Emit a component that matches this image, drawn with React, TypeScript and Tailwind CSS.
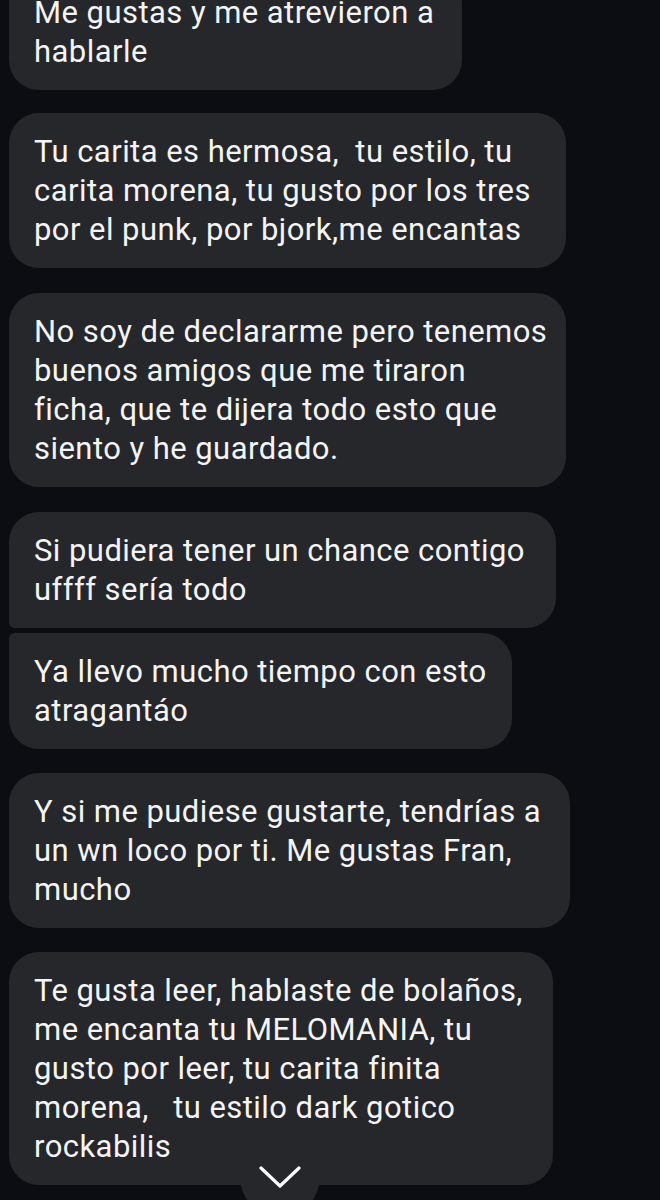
const messages = [
  { lines: ['Me gustas y me atrevieron a', 'hablarle'], width: 'w-[453px]', shape: 'rounded-[30px]', gap: 'mt-0' },
  {
    lines: ['Tu carita es hermosa,  tu estilo, tu', 'carita morena, tu gusto por los tres', 'por el punk, por bjork,me encantas'],
    width: 'w-[557px]',
    shape: 'rounded-[30px]',
    gap: 'mt-[23px]',
  },
  {
    lines: ['No soy de declararme pero tenemos', 'buenos amigos que me tiraron', 'ficha, que te dijera todo esto que', 'siento y he guardado.'],
    width: 'w-[557px]',
    shape: 'rounded-[30px]',
    gap: 'mt-[25px]',
  },
  {
    lines: ['Si pudiera tener un chance contigo', 'uffff sería todo'],
    width: 'w-[547px]',
    shape: 'rounded-[30px] rounded-bl-[6px]',
    gap: 'mt-[25px]',
  },
  {
    lines: ['Ya llevo mucho tiempo con esto', 'atragantáo'],
    width: 'w-[503px]',
    shape: 'rounded-[30px] rounded-tl-[6px]',
    gap: 'mt-[5px]',
  },
  {
    lines: ['Y si me pudiese gustarte, tendrías a', 'un wn loco por ti. Me gustas Fran,', 'mucho'],
    width: 'w-[561px]',
    shape: 'rounded-[30px]',
    gap: 'mt-[24px]',
  },
  {
    lines: [
      'Te gusta leer, hablaste de bolaños,',
      'me encanta tu MELOMANIA, tu',
      'gusto por leer, tu carita finita',
      'morena,   tu estilo dark gotico',
      'rockabilis',
    ],
    width: 'w-[544px]',
    shape: 'rounded-[30px]',
    gap: 'mt-[24px]',
  },
];

export default function App() {
  return (
    <div className="relative h-[1200px] w-[660px] overflow-hidden bg-[#0b0d12] font-['Roboto',sans-serif] text-[#f4f4f5]">
      <div className="mt-[-26px] flex flex-col items-start px-[9px]">
        {messages.map((m, i) => (
          <div key={i} className={`${m.gap} ${m.width} ${m.shape} bg-[#25272b] py-[19px] pl-[25px]`}>
            {m.lines.map((line, j) => (
              <p key={j} className="whitespace-pre text-[31px] leading-[39px] tracking-[0.45px]">
                {line}
              </p>
            ))}
          </div>
        ))}
      </div>

      {/* scroll-to-bottom button */}
      <div className="absolute left-[240px] top-[1137px] flex h-[80px] w-[80px] items-center justify-center rounded-full bg-[#25272b]">
        <svg width="42" height="22" viewBox="0 0 42 22" fill="none">
          <path d="M2 2 L21 20 L40 2" stroke="#ffffff" strokeWidth="3.2" strokeLinecap="round" strokeLinejoin="round" />
        </svg>
      </div>
    </div>
  );
}
